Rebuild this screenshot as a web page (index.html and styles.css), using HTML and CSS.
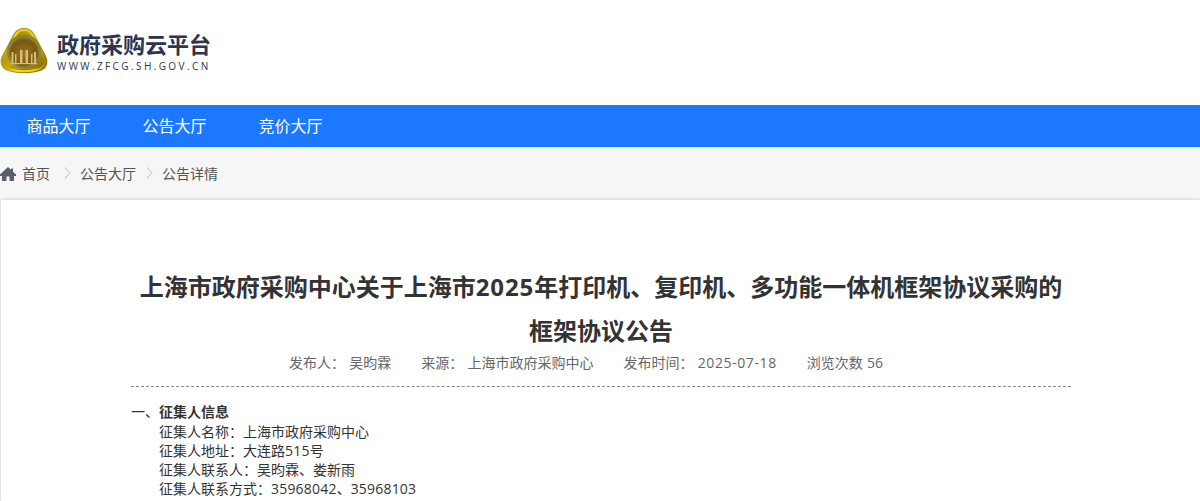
FILE: index.html
```html
<!DOCTYPE html>
<html lang="zh-CN">
<head>
    <meta charset="UTF-8">
    <meta name="viewport" content="width=device-width, initial-scale=1.0">
    <title>政府采购云平台</title>
    <link rel="stylesheet" href="styles.css">
</head>
<body>
    <header class="header">
        <svg class="logo" viewBox="0 0 48 48" width="48" height="48" aria-hidden="true">
            <defs>
                <linearGradient id="gold" x1="0" y1="0" x2="1" y2="1">
                    <stop offset="0" stop-color="#9c7e10"/>
                    <stop offset="0.5" stop-color="#c2a414"/>
                    <stop offset="1" stop-color="#7c5e08"/>
                </linearGradient>
                <linearGradient id="rim" x1="0" y1="0" x2="1" y2="0">
                    <stop offset="0" stop-color="#b89a10"/>
                    <stop offset="0.3" stop-color="#f0dc1a"/>
                    <stop offset="0.75" stop-color="#e6d018"/>
                    <stop offset="1" stop-color="#a08208"/>
                </linearGradient>
                <radialGradient id="inner" cx="0.5" cy="0.55" r="0.55">
                    <stop offset="0" stop-color="#9a7220"/>
                    <stop offset="0.8" stop-color="#7a5812"/>
                    <stop offset="1" stop-color="#7f7430"/>
                </radialGradient>
            </defs>
            <path d="M24 1C29 1 32 3 35 8L46 29C49 35 47 42 40 44C29 47 19 47 8 44C1 42 -1 35 2 29L13 8C16 3 19 1 24 1Z" fill="url(#gold)"/>
            <path d="M24 3C28 3 31 5 33 9L44 30C46 35 45 40 39 42C29 45 19 45 9 42C3 40 2 35 4 30L15 9C17 5 20 3 24 3Z" fill="none" stroke="url(#rim)" stroke-width="2"/>
            <circle cx="24" cy="24.500" r="17" fill="#8a8436"/>
            <circle cx="24" cy="25" r="14.500" fill="url(#inner)"/>
            <g fill="#d8bc78">
                <rect x="11.500" y="25" width="2" height="11"/>
                <rect x="15" y="27" width="1.500" height="9"/>
                <rect x="20" y="23" width="2.500" height="13"/>
                <rect x="25.500" y="23" width="2.500" height="13"/>
                <rect x="31" y="27" width="1.500" height="9"/>
                <rect x="34" y="25" width="2" height="11"/>
                <rect x="11" y="36" width="26" height="1.200"/>
            </g>
        </svg>
        <div class="brand">
            <div class="brand-name">政府采购云平台</div>
            <div class="brand-url">WWW.ZFCG.SH.GOV.CN</div>
        </div>
    </header>

    <nav class="nav">
        <a class="nav-item">商品大厅</a>
        <a class="nav-item">公告大厅</a>
        <a class="nav-item">竞价大厅</a>
    </nav>

    <div class="crumbs">
        <svg class="home-icon" viewBox="0 0 16 16" width="16" height="16" aria-hidden="true">
            <path d="M8 1L0 8.500V10H2V15H6.500V10.500H9.500V15H14V10H16V8.500L13 5.700V2.500H11V3.800Z" fill="#5a5f6b"/>
        </svg>
        <span class="crumb-first">首页</span>
        <svg class="crumb-sep" viewBox="0 0 7 12" width="7" height="12" aria-hidden="true"><path d="M1 0.500L6 6L1 11.500" fill="none" stroke="#cfd2d8" stroke-width="1.200"/></svg>
        <span>公告大厅</span>
        <svg class="crumb-sep" viewBox="0 0 7 12" width="7" height="12" aria-hidden="true"><path d="M1 0.500L6 6L1 11.500" fill="none" stroke="#cfd2d8" stroke-width="1.200"/></svg>
        <span>公告详情</span>
    </div>

    <main class="card">
        <article class="notice">
            <h1 class="notice-title">上海市政府采购中心关于上海市<span class="title-num">2025</span>年打印机、复印机、多功能一体机框架协议采购的框架协议公告</h1>
            <div class="notice-meta">
                <span>发布人： 吴昀霖</span>
                <span>来源： 上海市政府采购中心</span>
                <span>发布时间： <span class="date">2025-07-18</span></span>
                <span>浏览次数 56</span>
            </div>
            <div class="notice-body">
                <p class="section-head">一、<b>征集人信息</b></p>
                <p class="indent">征集人名称：上海市政府采购中心</p>
                <p class="indent">征集人地址：大连路<span class="num">515</span>号</p>
                <p class="indent">征集人联系人：吴昀霖、娄新雨</p>
                <p class="indent">征集人联系方式：<span class="num">35968042</span>、<span class="num">35968103</span></p>
            </div>
        </article>
    </main>
</body>
</html>
```

FILE: styles.css
```css
html, body {
    height: 501px;
    overflow: hidden;
}
body {
    margin: 0;
    font-family: "Open Sans", "Noto Sans CJK SC", sans-serif;
    color: #333;
    background-color: #f6f6f6;
}
.header {
    height: 105px;
    padding-bottom: 4px;
    box-sizing: border-box;
    background: white;
    display: flex;
    align-items: center;
}
.logo {
    flex: none;
}
.brand {
    margin-left: 9px;
}
.brand-name {
    font-size: 22px;
    line-height: 30px;
    font-weight: 700;
    color: #2b3550;
}
.brand-url {
    font-size: 10px;
    line-height: 14px;
    letter-spacing: 2.4px;
    color: #2b3550;
}
.nav {
    height: 42px;
    padding: 0 0 2px 26.500px;
    box-sizing: border-box;
    background-color: #1c78ff;
    display: flex;
    gap: 52px;
    align-items: center;
}
.nav-item {
    color: white;
    font-size: 16px;
}
.crumbs {
    height: 53px;
    padding-bottom: 2px;
    box-sizing: border-box;
    display: flex;
    align-items: center;
    font-size: 14px;
    color: #555;
}
.home-icon {
    margin: 3px 6px 0 0;
}
.crumb-first {
    margin-right: 4px;
}
.crumb-sep {
    margin: 0 9px 0 10px;
}
.card {
    margin-left: 1px;
    height: 301px;
    background: white;
    box-shadow: 0 0 4px rgba(0,0,0,0.2);
    padding: 0 129px 0 130px;
}
.notice-title {
    margin: 0;
    padding-top: 65px;
    font-size: 24px;
    line-height: 44px;
    font-weight: 700;
    text-align: center;
    color: #333;
}
.title-num {
    letter-spacing: 0.9px;
}
.notice-meta {
    display: flex;
    justify-content: center;
    font-size: 14px;
    line-height: 19px;
    word-spacing: 0.6px;
    padding-bottom: 14px;
    color: #666;
    border-bottom: 1px dashed #888;
}
.notice-meta > span {
    margin-right: 30px;
}
.date {
    letter-spacing: 0.6px;
}
.notice-body {
    padding-top: 15px;
    font-size: 14px;
    line-height: 19px;
    color: #333;
}
.notice-body p {
    margin: 0;
}
.notice-body .section-head {
    margin-bottom: 1px;
}
.indent {
    padding-left: 28px;
}
.num {
    letter-spacing: 0.2px;
}
```
